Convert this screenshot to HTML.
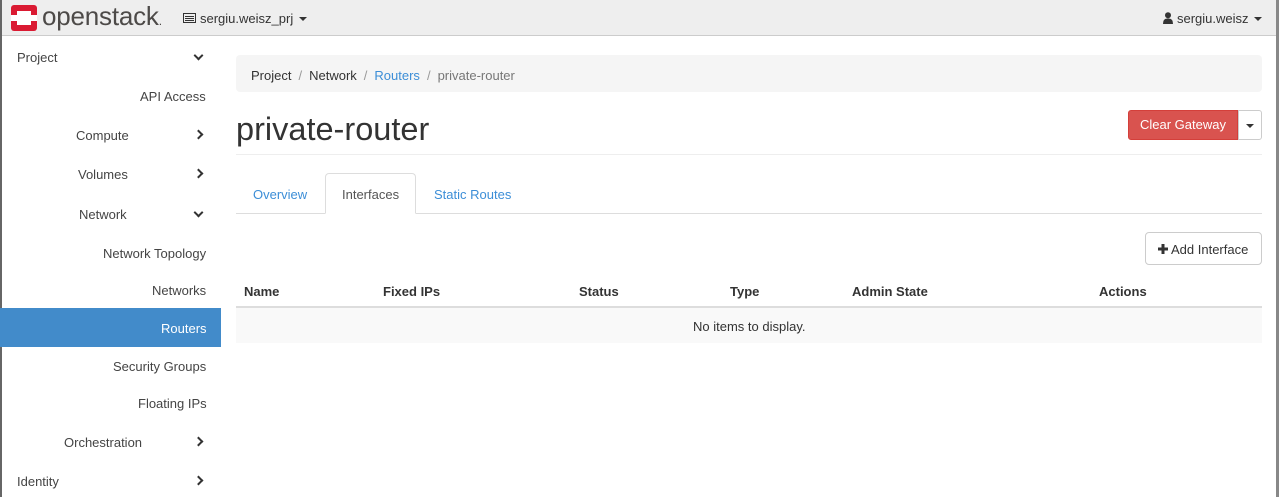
<!DOCTYPE html>
<html><head><style>
*{box-sizing:border-box;margin:0;padding:0}
body{width:1279px;height:497px;overflow:hidden;background:#fff;font-family:"Liberation Sans",Arial,sans-serif;font-size:13px;color:#333;position:relative}
.a{position:absolute;white-space:nowrap}
.hdr{left:0;top:0;width:1279px;height:36px;background:#eee;border-bottom:1px solid #ccc}
.side .a{color:#444}
.chev{width:7px;height:7px;border-right:2.5px solid #333;border-bottom:2.5px solid #333}
.r{transform:rotate(-45deg)}
.d{transform:rotate(45deg)}
.blue{color:#3c8ed7}
.sep{color:#999;padding:0 7px}
</style></head><body>
<div class="a hdr"></div>
<div class="a" style="left:0;top:0;width:2px;height:497px;background:#666"></div>
<div class="a" style="left:1276px;top:0;width:3px;height:497px;background:#888"></div>
<svg class="a" style="left:11px;top:5px" width="26" height="26" viewBox="0 0 26 26"><rect x="0" y="0" width="26" height="26" rx="3" fill="#da1a32"/><rect x="6" y="6" width="14" height="14" fill="#fff"/><rect x="0" y="10" width="26" height="6" fill="#fff"/></svg>
<div class="a" style="left:42px;top:1px;font-size:26px;color:#4d4a48;letter-spacing:-0.2px">openstack<span style="font-size:12px">.</span></div>
<svg class="a" style="left:183px;top:13px" width="13" height="10"><rect x="0.5" y="0.5" width="12" height="9" fill="none" stroke="#333"/><rect x="2" y="3" width="9" height="1" fill="#333"/><rect x="2" y="5" width="9" height="1" fill="#333"/><rect x="2" y="7" width="9" height="1" fill="#333"/></svg>
<div class="a" style="left:200px;top:11px;color:#333">sergiu.weisz_prj</div>
<div class="a" style="left:299px;top:17px;border:4px solid transparent;border-top-color:#333;border-bottom:0"></div>
<svg class="a" style="left:1163px;top:12px" width="10" height="12"><circle cx="5" cy="3.2" r="3" fill="#333"/><path d="M0 12 Q0 6 5 6.5 Q10 6 10 12Z" fill="#333"/></svg>
<div class="a" style="left:1177px;top:11px;color:#333">sergiu.weisz</div>
<div class="a" style="left:1254px;top:17px;border:4px solid transparent;border-top-color:#333;border-bottom:0"></div>
<div class="side">
<div class="a" style="left:17px;top:50px">Project</div><div class="a chev d" style="left:195px;top:52px"></div>
<div class="a" style="left:140px;top:89px">API Access</div>
<div class="a" style="left:76px;top:128px">Compute</div><div class="a chev r" style="left:195px;top:131px"></div>
<div class="a" style="left:78px;top:167px">Volumes</div><div class="a chev r" style="left:195px;top:170px"></div>
<div class="a" style="left:79px;top:207px">Network</div><div class="a chev d" style="left:195px;top:209px"></div>
<div class="a" style="left:103px;top:246px">Network Topology</div>
<div class="a" style="left:152px;top:283px">Networks</div>
<div class="a" style="left:0;top:308px;width:221px;height:39px;background:#428bca"></div>
<div class="a" style="left:161px;top:321px;color:#fff">Routers</div>
<div class="a" style="left:113px;top:359px">Security Groups</div>
<div class="a" style="left:138px;top:396px">Floating IPs</div>
<div class="a" style="left:64px;top:435px">Orchestration</div><div class="a chev r" style="left:195px;top:438px"></div>
<div class="a" style="left:17px;top:474px">Identity</div><div class="a chev r" style="left:195px;top:477px"></div>
</div>
<div class="a" style="left:236px;top:55px;width:1026px;height:37px;background:#f5f5f5;border-radius:4px"></div>
<div class="a" style="left:251px;top:68px;color:#333">Project<span class="sep">/</span>Network<span class="sep">/</span><span class="blue">Routers</span><span class="sep">/</span><span style="color:#777">private-router</span></div>
<div class="a" style="left:236px;top:111px;font-size:32.5px;color:#333">private-router</div>
<div class="a" style="left:236px;top:154px;width:1026px;height:1px;background:#eee"></div>
<div class="a" style="left:1128px;top:110px;width:110px;height:30px;background:#d9534f;border:1px solid #d43f3a;border-radius:3px 0 0 3px;color:#fff;text-align:center;line-height:28px">Clear Gateway</div>
<div class="a" style="left:1238px;top:110px;width:24px;height:30px;background:#fff;border:1px solid #ccc;border-radius:0 3px 3px 0"></div>
<div class="a" style="left:1246px;top:124px;border:4px solid transparent;border-top-color:#333;border-bottom:0"></div>
<div class="a" style="left:236px;top:213px;width:1026px;height:1px;background:#ddd"></div>
<div class="a" style="left:325px;top:173px;width:91px;height:41px;background:#fff;border:1px solid #ddd;border-bottom-color:#fff;border-radius:4px 4px 0 0"></div>
<div class="a blue" style="left:253px;top:187px">Overview</div>
<div class="a" style="left:342px;top:187px;color:#555">Interfaces</div>
<div class="a blue" style="left:434px;top:187px">Static Routes</div>
<div class="a" style="left:1145px;top:232px;width:117px;height:33px;border:1px solid #ccc;border-radius:4px;background:#fff"></div>
<svg class="a" style="left:1158px;top:244px" width="10" height="10"><rect x="3.5" y="0" width="3" height="10" fill="#333"/><rect x="0" y="3.5" width="10" height="3" fill="#333"/></svg>
<div class="a" style="left:1171px;top:242px;color:#333">Add Interface</div>
<div class="a" style="left:244px;top:284px;font-weight:bold">Name</div>
<div class="a" style="left:383px;top:284px;font-weight:bold">Fixed IPs</div>
<div class="a" style="left:579px;top:284px;font-weight:bold">Status</div>
<div class="a" style="left:730px;top:284px;font-weight:bold">Type</div>
<div class="a" style="left:852px;top:284px;font-weight:bold">Admin State</div>
<div class="a" style="left:1099px;top:284px;font-weight:bold">Actions</div>
<div class="a" style="left:236px;top:306px;width:1026px;height:2px;background:#ddd"></div>
<div class="a" style="left:236px;top:308px;width:1026px;height:35px;background:#f9f9f9"></div>
<div class="a" style="left:693px;top:319px;color:#333">No items to display.</div>
</body></html>
